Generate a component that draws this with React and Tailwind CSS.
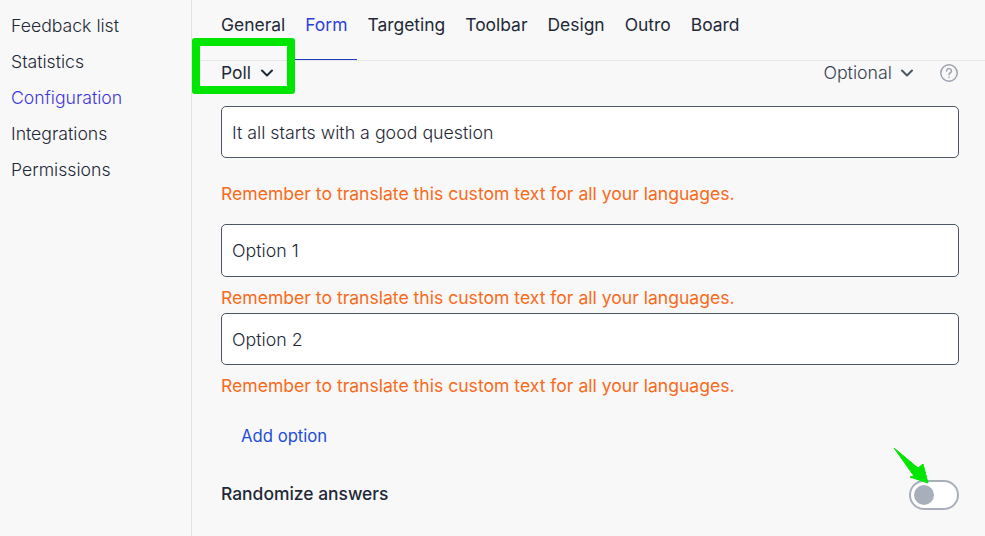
import React from "react";

const sideItems = ["Feedback list", "Statistics", "Configuration", "Integrations", "Permissions"];
const tabs = ["General", "Form", "Targeting", "Toolbar", "Design", "Outro", "Board"];
const warning = "Remember to translate this custom text for all your languages.";

const Chevron = ({ className }) => (
  <svg viewBox="0 0 20 20" className={className} fill="none" stroke="currentColor" strokeWidth="2" strokeLinecap="round" strokeLinejoin="round">
    <path d="M5 7.5 10 12.5l5-5" />
  </svg>
);

const TextBox = ({ value, className }) => (
  <div className={`flex items-center rounded-[5px] border border-[#4b5563] bg-white pl-[10px] text-[17.8px] font-light text-[#1f2937] ${className}`}>
    {value}
  </div>
);

const Warning = ({ className }) => (
  <p className={`h-[26px] text-[17.57px] leading-[26px] text-[#f96a1a] ${className}`}>{warning}</p>
);

const App = () => {
  return (
    <div className="relative flex h-[536px] w-[985px] overflow-hidden bg-[#f8f8f8] text-[17.45px] text-[#374151] [font-family:Inter,sans-serif]">
      <aside className="flex h-full w-[192px] shrink-0 flex-col gap-[10px] border-r border-[#e2e2e4] pl-[11px] pt-[13px]">
        {sideItems.map((item) => (
          <div key={item} className={`h-[26px] text-[17.65px] font-light leading-[26px] ${item === "Configuration" ? "text-[#3f36dc]" : "text-[#1f2937]"}`}>
            {item}
          </div>
        ))}
      </aside>

      <main className="flex-1">
        <div className="flex h-[61px] gap-[20px] border-b border-[#e5e7eb] pl-[29px] pt-[12px]">
          {tabs.map((tab) => (
            <div key={tab} className={`relative h-[26px] leading-[26px] ${tab === "Form" ? "text-[#2d3fd3]" : "text-[#1f2937]"}`}>
              {tab}
              {tab === "Form" && <span className="absolute left-[-10px] right-[-10px] top-[47px] h-px bg-[#1d3fb8]" />}
            </div>
          ))}
        </div>

        <div className="pl-[29px] pr-[26px]">
          <div className="flex h-[24px] items-center justify-between">
            <div className="flex items-center gap-[6px] text-[#1f2937]">
              Poll
              <Chevron className="h-[20px] w-[20px]" />
            </div>
            <div className="flex items-center text-[17.8px] font-light text-[#374151]">
              Optional
              <Chevron className="ml-[5px] h-[20px] w-[20px] text-[#4b5563]" />
              <svg viewBox="0 0 20 20" className="ml-[22px] h-[20px] w-[20px] text-[#9ca3af]" fill="none" stroke="currentColor" strokeWidth="1.5" strokeLinecap="round">
                <circle cx="10" cy="10" r="8.2" />
                <path d="M7.6 7.9a2.4 2.4 0 1 1 3.6 2.1c-.8.5-1.2 1-1.2 1.8" />
                <path d="M10 14.3v.1" />
              </svg>
            </div>
          </div>

          <TextBox value="It all starts with a good question" className="mt-[21px] h-[52px] pt-[2px]" />
          <Warning className="mt-[23px]" />
          <TextBox value="Option 1" className="mt-[17px] h-[53px] pt-[1px]" />
          <Warning className="mt-[8px]" />
          <TextBox value="Option 2" className="mt-[2px] h-[52px] pt-[2px]" />
          <Warning className="mt-[8px]" />
          <div className="ml-[20px] mt-[24px] h-[26px] text-[16.7px] leading-[26px] text-[#1d4ed8]">Add option</div>
          <div className="mt-[31px] flex items-center justify-between">
            <span className="mb-[2px] font-medium text-[#1f2937]">Randomize answers</span>
            <span className="flex h-[30px] w-[50px] items-center rounded-full border-2 border-[#a8afbb] bg-white pl-[3px]">
              <span className="h-[20px] w-[20px] rounded-full bg-[#a8afbb]" />
            </span>
          </div>
        </div>
      </main>

      {/* annotations drawn over the screenshot */}
      <div className="absolute left-[192px] top-[38px] h-[56px] w-[103px] rounded-[3px] border-[8px] border-[#00e600]" />
      <svg viewBox="0 0 50 50" className="absolute left-[885px] top-[440px] h-[50px] w-[50px]">
        <path d="M9 8 33 28 38 24 43 43 25 37 29 36Z" fill="#00e600" stroke="#00e600" strokeWidth="1" strokeLinejoin="round" />
      </svg>
    </div>
  );
};

export default App;
